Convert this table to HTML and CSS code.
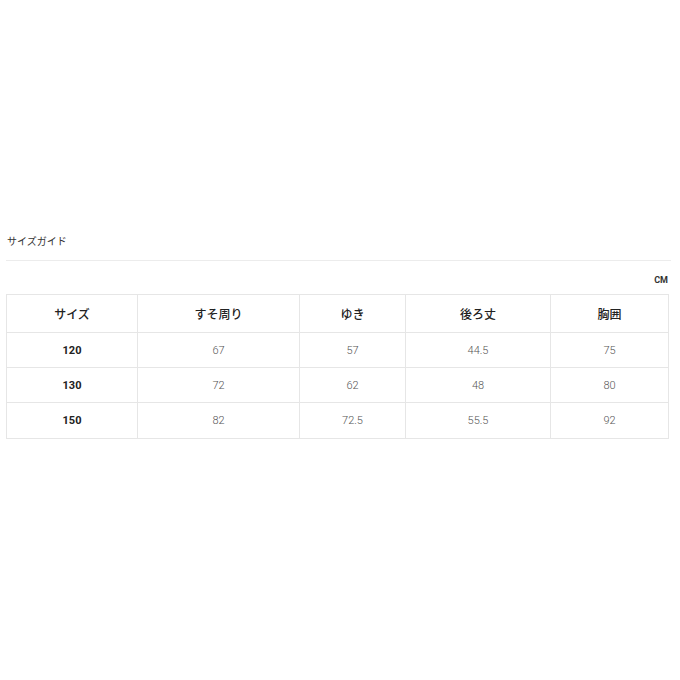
FILE: index.html
```html
<!DOCTYPE html>
<html lang="ja">
<head>
<meta charset="utf-8">
<link rel="stylesheet" href="styles.css">
</head>
<body>
<div class="guide">
  <div class="title">サイズガイド</div>
  <div class="rule"></div>
  <div class="unit">CM</div>
  <table class="sizes">
    <colgroup>
      <col class="c1"><col class="c2"><col class="c3"><col class="c4"><col class="c5">
    </colgroup>
    <thead>
      <tr><th>サイズ</th><th>すそ周り</th><th>ゆき</th><th>後ろ丈</th><th>胸囲</th></tr>
    </thead>
    <tbody>
      <tr><td class="lbl">120</td><td>67</td><td>57</td><td>44.5</td><td>75</td></tr>
      <tr><td class="lbl">130</td><td>72</td><td>62</td><td>48</td><td>80</td></tr>
      <tr><td class="lbl">150</td><td>82</td><td>72.5</td><td>55.5</td><td>92</td></tr>
    </tbody>
  </table>
</div>
</body>
</html>
```
FILE: styles.css
```css
html, body {
  margin: 0;
  padding: 0;
  background: #fff;
}
body {
  font-family: "Noto Sans CJK JP", "Noto Sans", sans-serif;
  color: #222;
}
.guide {
  padding: 234px 12px 0 6px;
}
.title {
  font-size: 10px;
  line-height: 14px;
  color: #333;
  padding-left: 1px;
}
.rule {
  margin-top: 12px;
  height: 1px;
  background: #ececec;
  margin-right: -3px;
}
.unit {
  margin-top: 13px;
  text-align: right;
  font-family: "Roboto", "Noto Sans", sans-serif;
  font-weight: 700;
  font-size: 9px;
  line-height: 12px;
  color: #333;
}
.sizes {
  margin-top: 8px;
  width: 662px;
  border-collapse: collapse;
  table-layout: fixed;
}
.c1 { width: 131px; }
.c2 { width: 162px; }
.c3 { width: 106px; }
.c4 { width: 145px; }
.c5 { width: 118px; }
.sizes th, .sizes td {
  border: 1px solid #e6e6e6;
  text-align: center;
  padding: 0;
}
.sizes th {
  height: 37px;
  font-size: 12px;
  font-weight: 500;
  color: #222;
}
.sizes td {
  height: 34px;
  font-family: "Roboto", "Noto Sans", sans-serif;
  font-size: 11px;
  font-weight: 300;
  color: #555;
}
.sizes tr:last-child td {
  height: 35px;
}
.sizes td.lbl {
  font-weight: 700;
  color: #222;
}
```
